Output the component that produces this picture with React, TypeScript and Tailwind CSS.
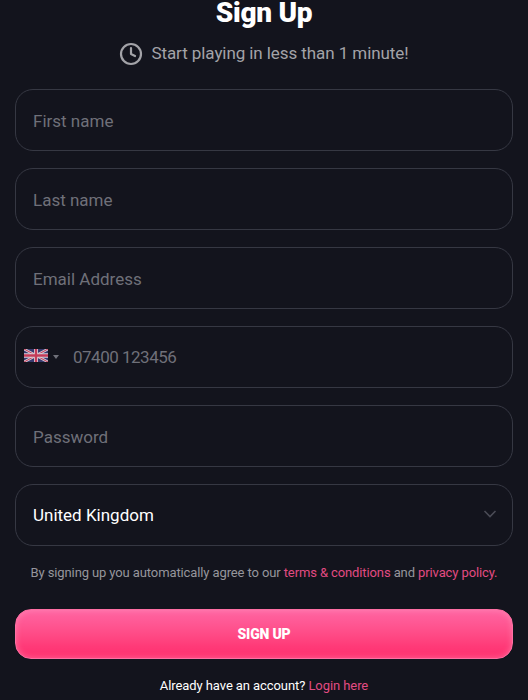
import { Clock } from 'lucide-react';

const fieldClass =
  'h-[62px] w-full rounded-[18px] border border-[#363843] bg-transparent px-[17px] pt-[2px] text-[17px] text-white outline-none placeholder:text-[#6f7079]';

function UkFlag() {
  return (
    <svg width="24" height="13" viewBox="0 0 60 30" preserveAspectRatio="none" className="mb-[3px] shrink-0 opacity-90">
      <rect width="60" height="30" fill="#3b3f78" />
      <path d="M0 0L60 30M60 0L0 30" stroke="#f1e6ee" strokeWidth="6" />
      <path d="M0 0L60 30M60 0L0 30" stroke="#d8405f" strokeWidth="2.4" />
      <path d="M30 0V30M0 15H60" stroke="#f1e6ee" strokeWidth="10" />
      <path d="M30 0V30M0 15H60" stroke="#d8405f" strokeWidth="6" />
    </svg>
  );
}

export default function App() {
  return (
    <div className="h-[700px] w-[528px] overflow-hidden bg-[#13141d] px-[15px] font-['Roboto',sans-serif]">
      <h1 className="h-[25px] pt-[1px] text-center text-[28px] leading-[24px] font-black tracking-[-0.3px] text-white">Sign Up</h1>
      <div className="mt-[15px] flex h-[28px] items-center justify-center gap-[8px] text-[17px] text-[#a3a3a8]">
        <Clock size={24} strokeWidth={2.2} className="text-[#a3a3a8]" />
        <span className="tracking-[-0.08px]">Start playing in less than 1 minute!</span>
      </div>

      <form className="mt-[21px] flex flex-col gap-[17px]">
        <input className={fieldClass} placeholder="First name" />
        <input className={fieldClass} placeholder="Last name" />
        <input className={fieldClass} placeholder="Email Address" />
        <div className="flex h-[62px] items-center rounded-[18px] border border-[#363843] pl-[8px]">
          <UkFlag />
          <span className="mb-[1px] ml-[5px] h-0 w-0 border-x-[3px] border-t-[4px] border-x-transparent border-t-[#6f7079]" />
          <input
            className="ml-[14px] min-w-0 flex-1 bg-transparent pt-[2px] text-[17px] tracking-[-0.5px] text-white outline-none placeholder:text-[#6f7079]"
            placeholder="07400 123456"
          />
        </div>
        <input className={fieldClass} type="password" placeholder="Password" />
        <div className="flex h-[62px] items-center justify-between rounded-[18px] border border-[#363843] pt-[1px] pr-[15px] pl-[17px] text-[17px] text-white">
          <span>United Kingdom</span>
          <svg width="14" height="8" viewBox="0 0 14 8" fill="none" stroke="#4a4b55" strokeWidth="1.6" className="mb-[4px]">
            <path d="M1.5 1L7 6.5L12.5 1" />
          </svg>
        </div>
      </form>

      <p className="mt-[17px] text-center text-[13px] leading-[20px] tracking-[-0.11px] whitespace-nowrap text-[#96969c]">
        By signing up you automatically agree to our <a className="text-[#e24b82]">terms &amp; conditions</a> and{' '}
        <a className="text-[#e24b82]">privacy policy.</a>
      </p>

      <button
        type="button"
        className="mt-[26px] h-[50px] w-full rounded-[16px] border border-[#ff6fa4] bg-gradient-to-b from-[#ff65a3] via-[#ff3a78] via-75% to-[#ff2f6e] text-[14px] font-black tracking-[-0.2px] text-white shadow-[inset_0_0_6px_rgba(255,170,200,0.45)]"
      >
        SIGN UP
      </button>

      <p className="mt-[17px] text-center text-[13px] leading-[20px] tracking-[-0.08px] text-white">
        Already have an account? <a className="text-[#e24b82]">Login here</a>
      </p>
    </div>
  );
}
